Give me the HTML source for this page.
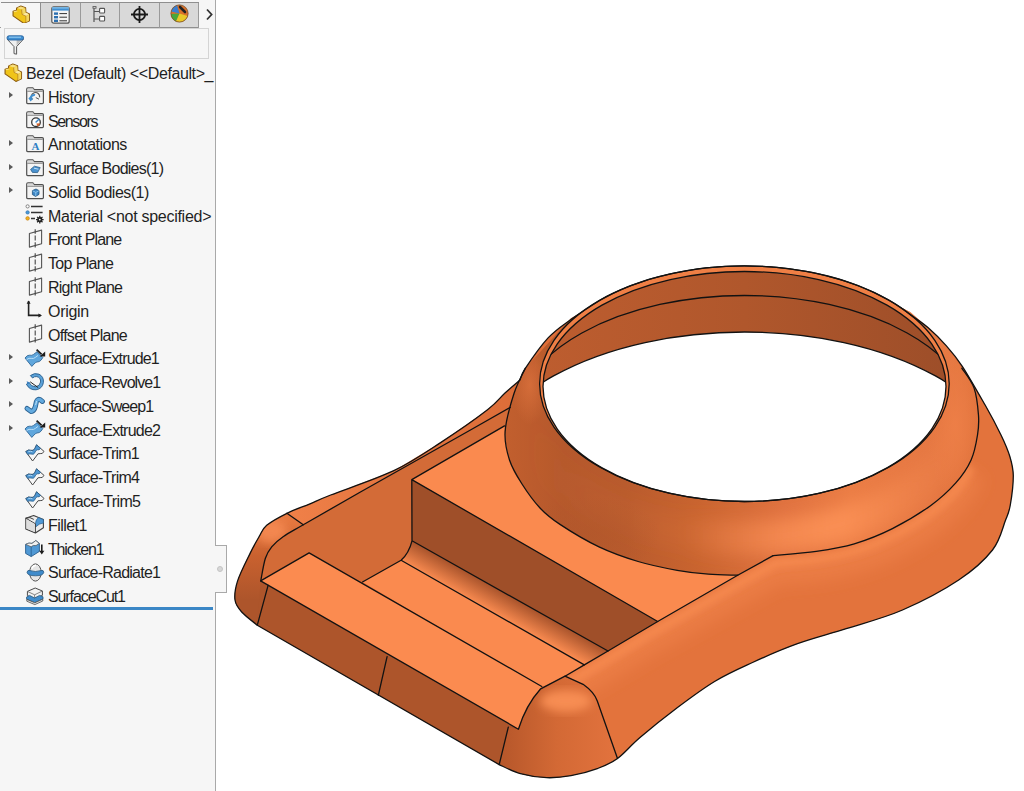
<!DOCTYPE html>
<html><head><meta charset="utf-8"><style>
html,body{margin:0;padding:0;width:1024px;height:791px;overflow:hidden;background:#fff;}
#side{position:absolute;left:0;top:0;width:215px;height:791px;background:#f6f6f6;border-right:1px solid #a9a9a9;overflow:hidden}
.row{position:absolute;font-family:"Liberation Sans",sans-serif;font-size:16px;line-height:23.77px;height:23.77px;color:#1f1f1f;white-space:nowrap;}
.exp{position:absolute;left:9px;width:0;height:0;border-top:3.5px solid transparent;border-bottom:3.5px solid transparent;border-left:4px solid #5a5a5a;}
.ic{position:absolute;overflow:visible}
#model{position:absolute;left:0;top:0}
</style></head><body>
<svg id="model" width="1024" height="791" viewBox="0 0 1024 791"><defs>
<linearGradient id="gCone" x1="505" y1="0" x2="985" y2="0" gradientUnits="userSpaceOnUse">
 <stop offset="0" stop-color="#c8612f"/><stop offset="0.25" stop-color="#d96b36"/><stop offset="0.6" stop-color="#f5874c"/><stop offset="0.85" stop-color="#ea7a40"/><stop offset="1" stop-color="#dc6c36"/></linearGradient>
<linearGradient id="gInner" x1="540" y1="0" x2="950" y2="0" gradientUnits="userSpaceOnUse">
 <stop offset="0" stop-color="#bd5d2f"/><stop offset="0.5" stop-color="#b0572c"/><stop offset="1" stop-color="#9d4e29"/></linearGradient>
<linearGradient id="gFillet" x1="0" y1="0" x2="1" y2="0" gradientTransform="rotate(0)">
 <stop offset="0" stop-color="#f98a4f"/><stop offset="1" stop-color="#a5522b"/></linearGradient>
<linearGradient id="gFil2" gradientUnits="userSpaceOnUse" x1="500" y1="616.8" x2="511.3" y2="596.7">
 <stop offset="0" stop-color="#fb8c51"/><stop offset="1" stop-color="#a8532b"/></linearGradient>
<radialGradient id="gRail" gradientUnits="userSpaceOnUse" cx="720" cy="600" r="260">
 <stop offset="0" stop-color="#f78a4f"/><stop offset="0.5" stop-color="#e57640"/><stop offset="1" stop-color="#dd6d37"/></radialGradient>
<linearGradient id="gCapR" gradientUnits="userSpaceOnUse" x1="505" y1="0" x2="620" y2="0">
 <stop offset="0" stop-color="#b8582b"/><stop offset="0.45" stop-color="#d36935"/><stop offset="1" stop-color="#e3733e"/></linearGradient>
<linearGradient id="gCapL" gradientUnits="userSpaceOnUse" x1="0" y1="520" x2="0" y2="600">
 <stop offset="0" stop-color="#e67840"/><stop offset="0.45" stop-color="#c9612f"/><stop offset="1" stop-color="#ad552b"/></linearGradient>
<radialGradient id="gHi"><stop offset="0" stop-color="#f98d52"/><stop offset="0.6" stop-color="#f08048" stop-opacity="0.7"/><stop offset="1" stop-color="#e87a42" stop-opacity="0"/></radialGradient>
<radialGradient id="gHi2"><stop offset="0" stop-color="#ef8048"/><stop offset="1" stop-color="#ef8048" stop-opacity="0"/></radialGradient>
<radialGradient id="gHi3"><stop offset="0" stop-color="#ec7d45"/><stop offset="1" stop-color="#ec7d45" stop-opacity="0"/></radialGradient>
<radialGradient id="gDk"><stop offset="0" stop-color="#b1572b"/><stop offset="1" stop-color="#b1572b" stop-opacity="0"/></radialGradient>
<linearGradient id="gHiLin" gradientUnits="userSpaceOnUse" x1="520" y1="0" x2="990" y2="0">
 <stop offset="0" stop-color="#f58a50" stop-opacity="0"/><stop offset="0.35" stop-color="#f58a50" stop-opacity="0.1"/><stop offset="0.55" stop-color="#fb9055" stop-opacity="0.7"/><stop offset="0.68" stop-color="#fb9055" stop-opacity="0.95"/><stop offset="0.85" stop-color="#f58a50" stop-opacity="0.35"/><stop offset="1" stop-color="#f58a50" stop-opacity="0.1"/></linearGradient>
<filter id="blur8" x="-20%" y="-20%" width="140%" height="140%"><feGaussianBlur stdDeviation="8"/></filter>
<filter id="blur5" x="-20%" y="-20%" width="140%" height="140%"><feGaussianBlur stdDeviation="5"/></filter>
<filter id="blur3" x="-20%" y="-20%" width="140%" height="140%"><feGaussianBlur stdDeviation="3"/></filter>
<linearGradient id="gLip" gradientUnits="userSpaceOnUse" x1="290" y1="0" x2="520" y2="0"><stop offset="0" stop-color="#f08048"/><stop offset="0.4" stop-color="#e57640"/><stop offset="1" stop-color="#dc6d38"/></linearGradient>
<linearGradient id="gConeBase" gradientUnits="userSpaceOnUse" x1="505" y1="0" x2="985" y2="0">
 <stop offset="0" stop-color="#c25f2e"/><stop offset="0.12" stop-color="#b5582c"/><stop offset="0.25" stop-color="#b95b2d"/><stop offset="0.4" stop-color="#c9642f"/><stop offset="0.58" stop-color="#e07240"/><stop offset="0.72" stop-color="#eb7d45"/><stop offset="0.88" stop-color="#e57742"/><stop offset="1" stop-color="#dc6e38"/></linearGradient>
<clipPath id="cTi"><ellipse cx="744.5" cy="386.5" rx="201.5" ry="115"/></clipPath>
<clipPath id="cHb"><ellipse cx="744.5" cy="482" rx="270" ry="150"/></clipPath>
</defs>
<path d="M257.3,625.2 C254.7,623.0 245.4,616.2 241.7,612.0 C238.0,607.8 235.7,605.2 235.0,600.0 C234.3,594.8 235.1,588.7 237.6,580.9 C240.1,573.1 246.6,560.5 250.2,553.1 C253.8,545.7 256.4,541.3 259.1,536.7 C261.9,532.1 262.1,529.2 266.7,525.3 C271.3,521.4 279.7,516.9 286.9,513.3 C294.1,509.7 302.7,506.9 310.0,503.8 C317.3,500.8 316.7,500.5 330.7,495.0 C344.7,489.5 375.5,479.4 393.8,470.7 C412.1,462.0 425.0,452.8 440.6,442.6 C456.2,432.5 476.8,418.1 487.5,409.8 C498.2,401.5 499.6,398.0 505.0,393.0 C510.4,388.0 517.5,382.2 520.0,380.0 L520.0,380.0 C520.9,378.1 520.6,375.3 525.3,368.3 C530.0,361.3 540.5,346.0 548.1,337.9 C555.7,329.8 562.1,325.9 570.9,319.5 C579.7,313.1 593.9,304.0 601.1,299.5 C608.3,295.1 609.7,294.9 614.2,292.8 C618.7,290.6 623.4,288.6 628.3,286.7 C633.1,284.8 638.1,283.0 643.2,281.3 C648.3,279.6 653.5,278.1 658.8,276.7 C664.1,275.3 669.6,274.0 675.1,272.8 C680.6,271.7 686.2,270.7 691.9,269.8 C697.6,269.0 703.3,268.2 709.1,267.7 C714.9,267.1 720.7,266.6 726.6,266.3 C732.4,266.1 738.3,265.9 744.1,265.9 C750.0,265.9 755.9,266.0 761.7,266.3 C767.6,266.6 773.4,267.0 779.2,267.6 C784.9,268.2 790.7,268.9 796.4,269.8 C802.0,270.6 807.7,271.6 813.2,272.7 C818.7,273.9 824.2,275.1 829.5,276.5 C834.8,277.9 840.1,279.5 845.2,281.1 C850.3,282.8 855.3,284.6 860.1,286.5 C864.9,288.4 869.7,290.4 874.2,292.6 C878.7,294.7 883.1,297.0 887.3,299.3 C891.5,301.7 895.5,304.1 899.4,306.7 C903.2,309.2 905.5,311.1 910.3,314.6 C915.1,318.1 922.2,322.6 928.2,327.8 C934.2,333.0 940.7,339.5 946.4,345.9 C952.1,352.3 955.9,356.5 962.3,366.3 C968.7,376.1 978.5,393.4 985.0,404.8 C991.5,416.2 996.8,426.3 1001.0,435.0 C1005.2,443.7 1008.0,450.2 1010.0,457.0 C1012.0,463.8 1013.2,467.8 1013.3,475.8 C1013.3,483.8 1011.6,497.6 1010.3,505.0 C1009.0,512.4 1008.6,512.5 1005.6,520.0 C1002.6,527.5 1000.3,540.0 992.5,550.0 C984.7,560.0 973.7,570.0 958.7,580.0 C943.7,590.0 921.2,601.9 902.5,610.0 C883.8,618.1 863.7,623.1 846.2,628.7 C828.7,634.3 813.1,638.1 797.5,643.7 C781.9,649.3 766.2,656.2 752.5,662.5 C738.8,668.8 727.5,673.7 715.0,681.2 C702.5,688.7 690.0,698.1 677.5,707.5 C665.0,716.9 650.0,729.0 640.0,737.5 C630.0,746.0 624.6,753.3 617.5,758.5 C610.4,763.7 605.0,765.7 597.3,768.6 C589.5,771.5 579.4,774.2 571.0,775.7 C562.6,777.2 555.1,778.0 546.7,777.7 C538.3,777.4 528.3,775.9 520.4,773.7 C512.5,771.5 502.7,766.1 499.2,764.6 Z" fill="#df6e38"/>
<clipPath id="cRail"><path d="M565.0,676.2 L584.3,664.9 L608.0,651.0 L657.7,621.5 L737.7,575.2 L773.1,555.6 C780.3,554.9 802.7,553.4 816.2,551.4 C829.7,549.4 841.6,547.6 854.3,543.8 C867.0,540.0 879.7,535.0 892.4,528.6 C905.1,522.2 919.9,513.3 930.5,505.7 C941.1,498.1 949.0,490.5 955.8,482.9 C962.6,475.3 967.5,468.0 971.1,460.0 C974.7,452.0 976.3,442.5 977.5,435.0 C978.7,427.5 979.1,423.1 978.5,415.2 C977.9,407.3 976.8,395.7 974.0,387.9 C971.2,380.1 963.8,371.5 961.8,368.2 L962.3,366.3  C966.1,372.7 978.5,393.4 985.0,404.8 C991.5,416.2 996.8,426.3 1001.0,435.0 C1005.2,443.7 1008.0,450.2 1010.0,457.0 C1012.0,463.8 1013.2,467.8 1013.3,475.8 C1013.3,483.8 1011.6,497.6 1010.3,505.0 C1009.0,512.4 1008.6,512.5 1005.6,520.0 C1002.6,527.5 1000.3,540.0 992.5,550.0 C984.7,560.0 973.7,570.0 958.7,580.0 C943.7,590.0 921.2,601.9 902.5,610.0 C883.8,618.1 863.7,623.1 846.2,628.7 C828.7,634.3 813.1,638.1 797.5,643.7 C781.9,649.3 766.2,656.2 752.5,662.5 C738.8,668.8 727.5,673.7 715.0,681.2 C702.5,688.7 690.0,698.1 677.5,707.5 C665.0,716.9 650.0,729.0 640.0,737.5 C630.0,746.0 621.2,755.0 617.5,758.5 L597.3,700.9 L583.1,684.3 Z"/></clipPath>
<g clip-path="url(#cRail)">
<rect x="560" y="360" width="470" height="420" fill="#e3733c"/>
<path d="M566,690 L600,670 L650,640 L740,590 L776,570  C782.7,569.5 803.2,568.8 816.2,567.0 C829.2,565.2 841.6,562.8 854.3,559.0 C867.0,555.2 879.7,550.3 892.4,544.0 C905.1,537.7 919.9,528.8 930.5,521.0 C941.1,513.2 949.0,505.2 955.8,497.0 C962.5,488.8 968.5,476.2 971.0,472.0" fill="none" stroke="#f48850" stroke-width="30" stroke-opacity="0.45" filter="url(#blur8)"/>
<path d="M566,684 L600,664 L650,634 L740,583 L776,563  C782.7,562.3 803.2,561.0 816.2,559.0 C829.2,557.0 841.6,554.8 854.3,551.0 C867.0,547.2 879.7,542.3 892.4,536.0 C905.1,529.7 919.9,520.7 930.5,513.0 C941.1,505.3 949.0,497.7 955.8,490.0 C962.5,482.3 968.5,470.8 971.0,467.0" fill="none" stroke="#f98d52" stroke-width="9" stroke-opacity="0.7" filter="url(#blur3)"/>
</g>
<clipPath id="cCone"><path d="M525.3,368.3 C523.4,372.5 517.4,382.9 514.0,393.5 C510.6,404.1 505.9,420.5 505.1,431.6 C504.4,442.7 506.7,451.3 509.5,460.0 C512.3,468.7 516.9,476.0 522.0,484.0 C527.1,492.0 533.7,501.3 540.0,508.0 C546.3,514.7 550.2,517.9 560.0,524.4 C569.8,530.9 586.0,540.7 599.0,546.9 C612.0,553.1 625.1,557.6 638.1,561.5 C651.1,565.4 665.5,568.2 677.2,570.3 C688.9,572.4 698.3,573.4 708.4,574.2 C718.5,575.0 732.8,575.0 737.7,575.2 L773.1,555.6  C780.3,554.9 802.7,553.4 816.2,551.4 C829.7,549.4 841.6,547.6 854.3,543.8 C867.0,540.0 879.7,535.0 892.4,528.6 C905.1,522.2 919.9,513.3 930.5,505.7 C941.1,498.1 949.0,490.5 955.8,482.9 C962.6,475.3 967.5,468.0 971.1,460.0 C974.7,452.0 976.3,442.5 977.5,435.0 C978.7,427.5 979.1,423.1 978.5,415.2 C977.9,407.3 976.8,395.7 974.0,387.9 C971.2,380.1 963.8,371.5 961.8,368.2 L946.4,345.9 L928.2,327.8 L910.3,312.1 L870,292 L800,272 L743,266 L680,272 L620,290 L570.9,318.2 Z"/></clipPath>
<g clip-path="url(#cCone)">
<rect x="480" y="250" width="540" height="340" fill="url(#gConeBase)"/>
<ellipse cx="744.5" cy="402" rx="222" ry="136" fill="none" stroke="url(#gHiLin)" stroke-width="34" filter="url(#blur8)"/>
<ellipse cx="590" cy="535" rx="70" ry="40" fill="url(#gDk)" opacity="0.6"/>
<ellipse cx="955" cy="425" rx="28" ry="75" fill="url(#gHi2)" opacity="0.8"/>
<ellipse cx="530" cy="385" rx="18" ry="40" fill="url(#gHi3)" opacity="0.5"/>
</g>
<ellipse cx="744.4" cy="383.7" rx="204.8" ry="117.8" fill="#ef7f45"/>
<ellipse cx="744.5" cy="386.5" rx="201.5" ry="115" fill="url(#gInner)"/>
<g clip-path="url(#cTi)"><ellipse cx="744.5" cy="482" rx="270" ry="150" fill="#ffffff"/></g>
<path d="M286.9,513.3 L330.7,495.0 L393.8,470.7 L440.6,442.6 L487.5,409.8 L505.0,393.0 L520.0,380.0 L525.3,368.3 L514.0,393.5 L510.4,407.3 L470.0,430.3 L360.0,492.3 L303.2,524.8 Z" fill="url(#gLip)"/>
<path d="M510.4,407.3 C503.7,411.1 495.1,416.1 470.0,430.3 C444.9,444.5 387.8,476.6 360.0,492.3 C332.2,508.0 316.1,517.3 303.3,524.7 C290.5,532.1 288.4,533.0 283.1,536.7 C277.8,540.4 274.6,543.2 271.7,546.8 C268.8,550.4 267.2,552.7 265.4,558.2 C263.6,563.7 261.7,576.0 261.0,579.6 L309.1,552.9 L362.5,582.0 L401.1,560.3 Q409,553 412,540.8 L411.8,479.6 L504.5,425.9 Z" fill="#d36b37"/>
<path d="M411.8,479.6 L504.5,425.9 C504.9,429.9 505.6,442.6 507.0,450.0 C508.4,457.4 510.5,464.3 513.0,470.0 C515.5,475.7 517.5,477.7 522.0,484.0 C526.5,490.3 533.7,501.3 540.0,508.0 C546.3,514.7 550.2,517.9 560.0,524.4 C569.8,530.9 586.0,540.7 599.0,546.9 C612.0,553.1 625.1,557.6 638.1,561.5 C651.1,565.4 665.5,568.2 677.2,570.3 C688.9,572.4 698.3,573.4 708.4,574.2 C718.5,575.0 732.8,575.0 737.7,575.2 L657.7,621.5 Z" fill="#fa8a4f"/>
<path d="M411.8,479.6 L657.7,621.5 L608.0,651.0 L412.0,540.8 Z" fill="#9f4f29"/>
<path d="M412,540.8 L608,651 L584.3,664.9 L401.1,560.3 Q409,553 412,540.8 Z" fill="url(#gFil2)"/>
<path d="M362.5,582.0 L401.1,560.3 L584.3,664.9 L565.0,676.2 L540.7,687.7 Z" fill="#fa8a4f"/>
<path d="M257.3,625.2 C254.7,623.0 245.4,616.2 241.7,612.0 C238.0,607.8 235.7,605.2 235.0,600.0 C234.3,594.8 235.1,588.7 237.6,580.9 C240.1,573.1 246.6,560.5 250.2,553.1 C253.8,545.7 256.4,541.3 259.1,536.7 C261.9,532.1 262.1,529.2 266.7,525.3 C271.3,521.4 283.5,515.3 286.9,513.3 L303.3,524.7 C299.9,526.7 288.4,533.0 283.1,536.7 C277.8,540.4 274.6,543.2 271.7,546.8 C268.8,550.4 267.2,552.7 265.4,558.2 C263.6,563.7 261.7,576.0 261.0,579.6 L268.1,585.3 Z" fill="url(#gCapL)"/>
<g clip-path="url(#cCapL)"><ellipse cx="271" cy="531" rx="16" ry="12" fill="#f58a52" opacity="0.9" filter="url(#blur5)"/></g>
<clipPath id="cCapL"><path d="M257.3,625.2 C254.7,623.0 245.4,616.2 241.7,612.0 C238.0,607.8 235.7,605.2 235.0,600.0 C234.3,594.8 235.1,588.7 237.6,580.9 C240.1,573.1 246.6,560.5 250.2,553.1 C253.8,545.7 256.4,541.3 259.1,536.7 C261.9,532.1 262.1,529.2 266.7,525.3 C271.3,521.4 283.5,515.3 286.9,513.3 L303.3,524.7 C299.9,526.7 288.4,533.0 283.1,536.7 C277.8,540.4 274.6,543.2 271.7,546.8 C268.8,550.4 267.2,552.7 265.4,558.2 C263.6,563.7 261.7,576.0 261.0,579.6 L268.1,585.3 Z"/></clipPath>
<path d="M260.6,580.9 L518.4,729.2 L499.2,764.6 L257.3,625.2 Z" fill="#ad552b"/>
<path d="M260.6,580.9 L309.1,552.9 L541.8,686.5 Q530,700 518.4,729.2 Z" fill="#fb8b50"/>
<path d="M508.3,727.2 L518.4,729.2 Q526,705 540.7,688.8 L565,676.2 L583.1,684.3 Q594,692 597.3,700.9 L617.5,758.5  C614.1,760.2 605.0,765.7 597.3,768.6 C589.5,771.5 579.4,774.2 571.0,775.7 C562.6,777.2 555.1,778.0 546.7,777.7 C538.3,777.4 528.3,775.9 520.4,773.7 C512.5,771.5 502.7,766.1 499.2,764.6 Z" fill="url(#gCapR)"/>
<clipPath id="cCapR"><path d="M508.3,727.2 L518.4,729.2 Q526,705 540.7,688.8 L565,676.2 L583.1,684.3 Q594,692 597.3,700.9 L617.5,758.5  C614.1,760.2 605.0,765.7 597.3,768.6 C589.5,771.5 579.4,774.2 571.0,775.7 C562.6,777.2 555.1,778.0 546.7,777.7 C538.3,777.4 528.3,775.9 520.4,773.7 C512.5,771.5 502.7,766.1 499.2,764.6 Z"/></clipPath>
<g clip-path="url(#cCapR)"><ellipse cx="566" cy="701" rx="26" ry="11" fill="#f78d53" filter="url(#blur5)"/></g>
<g fill="none" stroke="#121212" stroke-width="1.3" stroke-linejoin="round" stroke-linecap="round">
<path d="M257.3,625.2 C254.7,623.0 245.4,616.2 241.7,612.0 C238.0,607.8 235.7,605.2 235.0,600.0 C234.3,594.8 235.1,588.7 237.6,580.9 C240.1,573.1 246.6,560.5 250.2,553.1 C253.8,545.7 256.4,541.3 259.1,536.7 C261.9,532.1 262.1,529.2 266.7,525.3 C271.3,521.4 279.7,516.9 286.9,513.3 C294.1,509.7 302.7,506.9 310.0,503.8 C317.3,500.8 316.7,500.5 330.7,495.0 C344.7,489.5 375.5,479.4 393.8,470.7 C412.1,462.0 425.0,452.8 440.6,442.6 C456.2,432.5 476.8,418.1 487.5,409.8 C498.2,401.5 499.6,398.0 505.0,393.0 C510.4,388.0 517.5,382.2 520.0,380.0 L520.0,380.0 C520.9,378.1 520.6,375.3 525.3,368.3 C530.0,361.3 540.5,346.0 548.1,337.9 C555.7,329.8 562.1,325.9 570.9,319.5 C579.7,313.1 593.9,304.0 601.1,299.5 C608.3,295.1 609.7,294.9 614.2,292.8 C618.7,290.6 623.4,288.6 628.3,286.7 C633.1,284.8 638.1,283.0 643.2,281.3 C648.3,279.6 653.5,278.1 658.8,276.7 C664.1,275.3 669.6,274.0 675.1,272.8 C680.6,271.7 686.2,270.7 691.9,269.8 C697.6,269.0 703.3,268.2 709.1,267.7 C714.9,267.1 720.7,266.6 726.6,266.3 C732.4,266.1 738.3,265.9 744.1,265.9 C750.0,265.9 755.9,266.0 761.7,266.3 C767.6,266.6 773.4,267.0 779.2,267.6 C784.9,268.2 790.7,268.9 796.4,269.8 C802.0,270.6 807.7,271.6 813.2,272.7 C818.7,273.9 824.2,275.1 829.5,276.5 C834.8,277.9 840.1,279.5 845.2,281.1 C850.3,282.8 855.3,284.6 860.1,286.5 C864.9,288.4 869.7,290.4 874.2,292.6 C878.7,294.7 883.1,297.0 887.3,299.3 C891.5,301.7 895.5,304.1 899.4,306.7 C903.2,309.2 905.5,311.1 910.3,314.6 C915.1,318.1 922.2,322.6 928.2,327.8 C934.2,333.0 940.7,339.5 946.4,345.9 C952.1,352.3 955.9,356.5 962.3,366.3 C968.7,376.1 978.5,393.4 985.0,404.8 C991.5,416.2 996.8,426.3 1001.0,435.0 C1005.2,443.7 1008.0,450.2 1010.0,457.0 C1012.0,463.8 1013.2,467.8 1013.3,475.8 C1013.3,483.8 1011.6,497.6 1010.3,505.0 C1009.0,512.4 1008.6,512.5 1005.6,520.0 C1002.6,527.5 1000.3,540.0 992.5,550.0 C984.7,560.0 973.7,570.0 958.7,580.0 C943.7,590.0 921.2,601.9 902.5,610.0 C883.8,618.1 863.7,623.1 846.2,628.7 C828.7,634.3 813.1,638.1 797.5,643.7 C781.9,649.3 766.2,656.2 752.5,662.5 C738.8,668.8 727.5,673.7 715.0,681.2 C702.5,688.7 690.0,698.1 677.5,707.5 C665.0,716.9 650.0,729.0 640.0,737.5 C630.0,746.0 624.6,753.3 617.5,758.5 C610.4,763.7 605.0,765.7 597.3,768.6 C589.5,771.5 579.4,774.2 571.0,775.7 C562.6,777.2 555.1,778.0 546.7,777.7 C538.3,777.4 528.3,775.9 520.4,773.7 C512.5,771.5 502.7,766.1 499.2,764.6 Z"/>
<ellipse cx="744.4" cy="383.7" rx="204.8" ry="117.8"/>
<ellipse cx="744.5" cy="386.5" rx="201.5" ry="115"/>
<g clip-path="url(#cTi)"><ellipse cx="744.5" cy="482" rx="270" ry="150"/><path d="M0,0"/></g>
<g clip-path="url(#cTi)"><ellipse cx="744.5" cy="423.5" rx="230" ry="128"/></g>
<path d="M525.3,368.3 C523.4,372.5 517.4,382.9 514.0,393.5 C510.6,404.1 505.9,420.5 505.1,431.6 C504.4,442.7 506.7,451.3 509.5,460.0 C512.3,468.7 516.9,476.0 522.0,484.0 C527.1,492.0 533.7,501.3 540.0,508.0 C546.3,514.7 550.2,517.9 560.0,524.4 C569.8,530.9 586.0,540.7 599.0,546.9 C612.0,553.1 625.1,557.6 638.1,561.5 C651.1,565.4 665.5,568.2 677.2,570.3 C688.9,572.4 698.3,573.4 708.4,574.2 C718.5,575.0 732.8,575.0 737.7,575.2"/>
<path d="M773.1,555.6 C780.3,554.9 802.7,553.4 816.2,551.4 C829.7,549.4 841.6,547.6 854.3,543.8 C867.0,540.0 879.7,535.0 892.4,528.6 C905.1,522.2 919.9,513.3 930.5,505.7 C941.1,498.1 949.0,490.5 955.8,482.9 C962.6,475.3 967.5,468.0 971.1,460.0 C974.7,452.0 976.3,442.5 977.5,435.0 C978.7,427.5 979.1,423.1 978.5,415.2 C977.9,407.3 976.8,395.7 974.0,387.9 C971.2,380.1 963.8,371.5 961.8,368.2"/>
<path d="M261.0,579.6 C261.7,576.0 263.6,563.7 265.4,558.2 C267.2,552.7 268.8,550.4 271.7,546.8 C274.6,543.2 277.8,540.4 283.1,536.7 C288.4,533.0 290.5,532.1 303.3,524.7 C316.1,517.3 332.2,508.0 360.0,492.3 C387.8,476.6 444.9,444.5 470.0,430.3 C495.1,416.1 503.7,411.1 510.4,407.3"/>
<path d="M773.1,555.6 L737.7,575.2 L657.7,621.5 L608.0,651.0 L584.3,664.9 L565.0,676.2"/>
<path d="M286.9,513.3 L303.3,524.7"/>
<path d="M260.6,580.9 L309.1,552.9 L541.8,686.5"/>
<path d="M260.6,580.9 L518.4,729.2 Q526,705 540.7,688.8 L565,676.2 L583.1,684.3 Q594,692 597.3,700.9 L617.5,758.5"/>
<path d="M268.1,585.3 L257.3,625.2 M387.1,656.6 L378.3,695.3 M508.3,727.2 L499.2,764.6"/>
<path d="M362.5,582 L401.1,560.3 Q409,553 412,540.8 L411.8,479.6 L504.5,425.9 M401.1,560.3 L584.3,664.9 M412,540.8 L608,651 M411.8,479.6 L657.7,621.5"/>
</g></svg>
<div id="side">
<div style="position:absolute;left:4px;top:28px;width:205px;height:31px;border:1px solid #d4d4d4;background:#f6f6f6;box-sizing:border-box"></div>
<div style="position:absolute;left:1px;top:2px;width:198px;height:1px;background:#8f8f8f"></div>
<div style="position:absolute;left:40px;top:3px;width:159px;height:24px;background:#d9d9d9;border-bottom:1px solid #8f8f8f"></div>
<div style="position:absolute;left:40px;top:3px;width:1px;height:25px;background:#8f8f8f"></div>
<div style="position:absolute;left:80px;top:3px;width:1px;height:25px;background:#9a9a9a"></div>
<div style="position:absolute;left:119px;top:3px;width:1px;height:25px;background:#9a9a9a"></div>
<div style="position:absolute;left:159px;top:3px;width:1px;height:25px;background:#9a9a9a"></div>
<div style="position:absolute;left:198px;top:3px;width:1px;height:25px;background:#9a9a9a"></div>
<div style="position:absolute;left:0px;top:27px;width:1px;height:1px;background:#9a9a9a"></div>
<svg style="position:absolute;left:12px;top:5px" width="18" height="18" viewBox="0 0 18 18"><path d="M1.06,6.2 L4.4,5.3 L4.7,2.9 L8.8,1.1 L13.6,2.75 L13.9,7.3 L17.5,9 L17.5,15.7 L11.9,18.4 L1.06,10.9 Z" fill="#f0c419" stroke="#8a5a12" stroke-width="1.1" stroke-linejoin="round"/><path d="M4.9,3.1 L8.8,1.5 L13.2,3 L9.6,4.5 Z" fill="#f7df80"/><path d="M9.8,4.7 L13.3,3.2 L13.5,7.4 L10.1,9.3 Z" fill="#f3d866"/><path d="M10.3,9.6 L13.9,7.6 L17.1,9.2 L13.7,10.9 Z" fill="#fbeaa6"/><path d="M13.9,11.2 L17.1,9.6 L17.1,15.4 L13.9,17.6 Z" fill="#f4d65e"/><path d="M9.6,4.5 L10.1,9.4 L13.8,11 L13.9,18" fill="none" stroke="#b07a20" stroke-width="0.7"/><path d="M1.3,6.3 L4.4,5.4 L5.6,6.2 L2.6,7.2 Z" fill="#f7df80"/></svg>
<svg style="position:absolute;left:51px;top:6px" width="19" height="18" viewBox="0 0 19 18"><rect x="0.8" y="0.8" width="17.4" height="16.4" rx="2" fill="#f4f4f4" stroke="#555" stroke-width="1.2"/><rect x="1.2" y="1.2" width="16.6" height="3.4" fill="#3f8fd2"/><rect x="1.2" y="1.2" width="16.6" height="1.4" fill="#7fbde9"/><rect x="3" y="6.4" width="4" height="2.4" fill="#2c6fb0"/><rect x="3" y="10" width="4" height="2.4" fill="#2c6fb0"/><rect x="3" y="13.6" width="4" height="2.4" fill="#2c6fb0"/><path d="M8.4,7.6 H16 M8.4,11.2 H16 M8.4,14.8 H16" stroke="#333" stroke-width="1"/></svg>
<svg style="position:absolute;left:92px;top:6px" width="16" height="18" viewBox="0 0 16 18"><path d="M2,1 V16 M2,5.5 H7 M2,13 H7" fill="none" stroke="#555" stroke-width="1.2"/><rect x="1" y="0.6" width="3" height="1.6" fill="#fff" stroke="#555" stroke-width="0.9"/><rect x="7.6" y="2.4" width="5" height="4.6" rx="0.8" fill="#fff" stroke="#555" stroke-width="1.1"/><rect x="7.6" y="10.4" width="5" height="4.6" rx="0.8" fill="#fff" stroke="#555" stroke-width="1.1"/></svg>
<svg style="position:absolute;left:130px;top:5px" width="19" height="19" viewBox="0 0 19 19"><circle cx="9.5" cy="9.5" r="5.6" fill="none" stroke="#1a1a1a" stroke-width="1.8"/><path d="M9.5,1 V18 M1,9.5 H18" stroke="#1a1a1a" stroke-width="1.8"/></svg>
<svg style="position:absolute;left:170px;top:4px" width="19" height="19" viewBox="0 0 19 19"><circle cx="9.5" cy="9.5" r="8.6" fill="#d9702a"/><path d="M9.5,9.5 L1,10 A8.6,8.6 0 0 0 6,17.4 Z" fill="#48a83a"/><path d="M9.5,9.5 L6,17.4 A8.6,8.6 0 0 0 17.6,12 Z" fill="#e8c828"/><path d="M9.5,9.5 L1.2,7.4 A8.6,8.6 0 0 1 7,1.2 Z" fill="#3a7fd0"/><path d="M10,3 L15,8" stroke="#222" stroke-width="2.6" stroke-linecap="round"/><circle cx="9.5" cy="9.5" r="8.6" fill="none" stroke="#7a4a20" stroke-width="0.8"/></svg>
<svg style="position:absolute;left:205px;top:8px" width="9" height="13" viewBox="0 0 9 13"><path d="M2,1.5 L6.6,6.5 L2,11.5" fill="none" stroke="#333" stroke-width="1.8"/></svg>
<svg style="position:absolute;left:6px;top:35px" width="19" height="20" viewBox="0 0 19 20"><path d="M1.2,4.2 L8,11.6 L8,18.6 L10.6,19.2 L10.6,11.6 L17.4,4.2 Z" fill="#efefef" stroke="#5a5a5a" stroke-width="1" stroke-linejoin="round"/><path d="M10.6,5 L15.6,5 L10.6,10.6 Z" fill="#bdbdbd"/><rect x="1" y="0.8" width="16.6" height="4.2" rx="2" fill="#3f8fd2" stroke="#2a64a0" stroke-width="0.9"/><rect x="3" y="1.6" width="12" height="1.2" fill="#8cc6ef"/></svg>

<div style="position:absolute;left:0;top:607px;width:213px;height:3px;background:#3b87c6"></div>
<div class="row" id="r0" style="top:62.10px;left:26px;letter-spacing:-0.400px">Bezel (Default) &lt;&lt;Default&gt;_</div>
<svg class="ic" style="left:4px;top:62.50px" width="18" height="18" viewBox="0 0 18 18"><path d="M1.06,6.2 L4.4,5.3 L4.7,2.9 L8.8,1.1 L13.6,2.75 L13.9,7.3 L17.5,9 L17.5,15.7 L11.9,18.4 L1.06,10.9 Z" fill="#f0c419" stroke="#8a5a12" stroke-width="1.1" stroke-linejoin="round"/><path d="M4.9,3.1 L8.8,1.5 L13.2,3 L9.6,4.5 Z" fill="#f7df80"/><path d="M9.8,4.7 L13.3,3.2 L13.5,7.4 L10.1,9.3 Z" fill="#f3d866"/><path d="M10.3,9.6 L13.9,7.6 L17.1,9.2 L13.7,10.9 Z" fill="#fbeaa6"/><path d="M13.9,11.2 L17.1,9.6 L17.1,15.4 L13.9,17.6 Z" fill="#f4d65e"/><path d="M9.6,4.5 L10.1,9.4 L13.8,11 L13.9,18" fill="none" stroke="#b07a20" stroke-width="0.7"/><path d="M1.3,6.3 L4.4,5.4 L5.6,6.2 L2.6,7.2 Z" fill="#f7df80"/></svg>
<div class="row" id="r1" style="top:85.87px;left:48px;letter-spacing:-0.500px">History</div>
<div class="exp" style="top:92.27px"></div>
<svg class="ic" style="left:26px;top:87.37px" width="18" height="18" viewBox="0 0 18 18"><path d="M0.7,2.2 Q0.7,0.8 2,0.8 L6.8,0.8 L8.3,2.6 L16.2,2.6 Q17.4,2.6 17.4,3.8 L17.4,15.6 Q17.4,16.6 16.4,16.6 L1.7,16.6 Q0.7,16.6 0.7,15.6 Z" fill="#f4f4f4" stroke="#4f4f4f" stroke-width="1.2"/><rect x="1.4" y="1.5" width="6" height="2.2" fill="#d8d8d8"/><path d="M1.3,4.3 L16.8,4.3" stroke="#7a7a7a" stroke-width="0.9"/><path d="M13.6,10.4 A4.2,4.2 0 1 0 6.4,12.6" fill="none" stroke="#555" stroke-width="1.2"/><path d="M9.8,10.6 L13,12.2" stroke="#555" stroke-width="1"/><path d="M3.6,10.2 Q5.6,6.6 9.4,7.2 L8.6,9 Q6.4,8.8 5.6,11.4 L7.4,11.6 L4.6,14.4 L2.4,11.2 Z" fill="#3f8fd0"/></svg>
<div class="row" id="r2" style="top:109.64px;left:48px;letter-spacing:-1.367px">Sensors</div>
<svg class="ic" style="left:26px;top:111.14px" width="18" height="18" viewBox="0 0 18 18"><path d="M0.7,2.2 Q0.7,0.8 2,0.8 L6.8,0.8 L8.3,2.6 L16.2,2.6 Q17.4,2.6 17.4,3.8 L17.4,15.6 Q17.4,16.6 16.4,16.6 L1.7,16.6 Q0.7,16.6 0.7,15.6 Z" fill="#f4f4f4" stroke="#4f4f4f" stroke-width="1.2"/><rect x="1.4" y="1.5" width="6" height="2.2" fill="#d8d8d8"/><path d="M1.3,4.3 L16.8,4.3" stroke="#7a7a7a" stroke-width="0.9"/><circle cx="10" cy="11.2" r="4.3" fill="#fff" stroke="#333" stroke-width="1.3"/><path d="M9.6,11.6 L13.4,7.8" stroke="#3a86c8" stroke-width="1.4"/><path d="M10.4,12.4 L14.2,12.2 A4.3,4.3 0 0 1 11.4,15.2 Z" fill="#d8642a"/></svg>
<div class="row" id="r3" style="top:133.41px;left:48px;letter-spacing:-0.520px">Annotations</div>
<div class="exp" style="top:139.81px"></div>
<svg class="ic" style="left:26px;top:134.91px" width="18" height="18" viewBox="0 0 18 18"><path d="M0.7,2.2 Q0.7,0.8 2,0.8 L6.8,0.8 L8.3,2.6 L16.2,2.6 Q17.4,2.6 17.4,3.8 L17.4,15.6 Q17.4,16.6 16.4,16.6 L1.7,16.6 Q0.7,16.6 0.7,15.6 Z" fill="#f4f4f4" stroke="#4f4f4f" stroke-width="1.2"/><rect x="1.4" y="1.5" width="6" height="2.2" fill="#d8d8d8"/><path d="M1.3,4.3 L16.8,4.3" stroke="#7a7a7a" stroke-width="0.9"/><text x="9.4" y="15.2" font-family="Liberation Serif" font-size="11" font-weight="bold" fill="#2f7fc4" text-anchor="middle">A</text></svg>
<div class="row" id="r4" style="top:157.18px;left:48px;letter-spacing:-0.750px">Surface Bodies(1)</div>
<div class="exp" style="top:163.58px"></div>
<svg class="ic" style="left:26px;top:158.68px" width="18" height="18" viewBox="0 0 18 18"><path d="M0.7,2.2 Q0.7,0.8 2,0.8 L6.8,0.8 L8.3,2.6 L16.2,2.6 Q17.4,2.6 17.4,3.8 L17.4,15.6 Q17.4,16.6 16.4,16.6 L1.7,16.6 Q0.7,16.6 0.7,15.6 Z" fill="#f4f4f4" stroke="#4f4f4f" stroke-width="1.2"/><rect x="1.4" y="1.5" width="6" height="2.2" fill="#d8d8d8"/><path d="M1.3,4.3 L16.8,4.3" stroke="#7a7a7a" stroke-width="0.9"/><path d="M4.6,10.4 L8.4,7.2 L14.2,8.6 L11.6,13.6 L6.4,13.4 Z" fill="#4a92cf" stroke="#2d5f8a" stroke-width="0.8"/><path d="M8,9.2 L12.4,10.2" stroke="#bfe0f8" stroke-width="1"/></svg>
<div class="row" id="r5" style="top:180.95px;left:48px;letter-spacing:-0.514px">Solid Bodies(1)</div>
<div class="exp" style="top:187.35px"></div>
<svg class="ic" style="left:26px;top:182.45px" width="18" height="18" viewBox="0 0 18 18"><path d="M0.7,2.2 Q0.7,0.8 2,0.8 L6.8,0.8 L8.3,2.6 L16.2,2.6 Q17.4,2.6 17.4,3.8 L17.4,15.6 Q17.4,16.6 16.4,16.6 L1.7,16.6 Q0.7,16.6 0.7,15.6 Z" fill="#f4f4f4" stroke="#4f4f4f" stroke-width="1.2"/><rect x="1.4" y="1.5" width="6" height="2.2" fill="#d8d8d8"/><path d="M1.3,4.3 L16.8,4.3" stroke="#7a7a7a" stroke-width="0.9"/><path d="M6.4,8.6 L10,7 L13,8.6 L13,12.4 L9.6,14.4 L6.4,12.6 Z" fill="#3d86c6" stroke="#25557f" stroke-width="0.8"/><path d="M6.6,8.8 L9.8,10.4 L12.8,8.8 M9.8,10.4 L9.8,14" stroke="#9bd0f4" stroke-width="0.8" fill="none"/></svg>
<div class="row" id="r6" style="top:204.72px;left:48px;letter-spacing:-0.278px">Material &lt;not specified&gt;</div>
<svg class="ic" style="left:26px;top:206.22px" width="18" height="18" viewBox="0 0 18 18"><circle cx="1.6" cy="0.4" r="1.6" fill="#fff" stroke="#777" stroke-width="0.9"/><circle cx="1.6" cy="6.4" r="1.7" fill="#4a9ad8" stroke="#2a6aa8" stroke-width="0.6"/><circle cx="1.6" cy="12.4" r="1.8" fill="#f0b020" stroke="#c07a10" stroke-width="0.6"/><path d="M5,0.4 L16.6,0.4 M5,6.4 L16.6,6.4 M5,12.4 L9,12.4" stroke="#333" stroke-width="1.5"/><circle cx="13.8" cy="13.6" r="2.6" fill="#222"/><path d="M13.8,9.8 V17.4 M10,13.6 H17.6 M11.1,10.9 L16.5,16.3 M16.5,10.9 L11.1,16.3" stroke="#222" stroke-width="1.3"/><circle cx="13.8" cy="13.6" r="0.9" fill="#fff"/></svg>
<div class="row" id="r7" style="top:228.49px;left:48px;letter-spacing:-0.860px">Front Plane</div>
<svg class="ic" style="left:26px;top:229.99px" width="18" height="18" viewBox="0 0 18 18"><path d="M3.4,3.5 L3.4,17.1 L15.6,13.8 L15.6,0.1 Z" fill="none" stroke="#555" stroke-width="1.1" stroke-linejoin="round"/><path d="M9.2,-0.8 V3.8 M9.2,5.6 V10.4 M9.2,12.2 V17.6" stroke="#444" stroke-width="1.1"/></svg>
<div class="row" id="r8" style="top:252.26px;left:48px;letter-spacing:-0.650px">Top Plane</div>
<svg class="ic" style="left:26px;top:253.76px" width="18" height="18" viewBox="0 0 18 18"><path d="M3.4,3.5 L3.4,17.1 L15.6,13.8 L15.6,0.1 Z" fill="none" stroke="#555" stroke-width="1.1" stroke-linejoin="round"/><path d="M9.2,-0.8 V3.8 M9.2,5.6 V10.4 M9.2,12.2 V17.6" stroke="#444" stroke-width="1.1"/></svg>
<div class="row" id="r9" style="top:276.03px;left:48px;letter-spacing:-0.780px">Right Plane</div>
<svg class="ic" style="left:26px;top:277.53px" width="18" height="18" viewBox="0 0 18 18"><path d="M3.4,3.5 L3.4,17.1 L15.6,13.8 L15.6,0.1 Z" fill="none" stroke="#555" stroke-width="1.1" stroke-linejoin="round"/><path d="M9.2,-0.8 V3.8 M9.2,5.6 V10.4 M9.2,12.2 V17.6" stroke="#444" stroke-width="1.1"/></svg>
<div class="row" id="r10" style="top:299.80px;left:48px;letter-spacing:-0.300px">Origin</div>
<svg class="ic" style="left:26px;top:301.30px" width="18" height="18" viewBox="0 0 18 18"><path d="M2.6,0 V14.4 H14.6" fill="none" stroke="#222" stroke-width="1.6"/><path d="M0.6,2.8 L2.6,-0.6 L4.6,2.8 Z M12.4,12.4 L16,14.4 L12.4,16.4 Z" fill="#222"/></svg>
<div class="row" id="r11" style="top:323.57px;left:48px;letter-spacing:-0.727px">Offset Plane</div>
<svg class="ic" style="left:26px;top:325.07px" width="18" height="18" viewBox="0 0 18 18"><path d="M3.4,3.5 L3.4,17.1 L15.6,13.8 L15.6,0.1 Z" fill="none" stroke="#555" stroke-width="1.1" stroke-linejoin="round"/><path d="M9.2,-0.8 V3.8 M9.2,5.6 V10.4 M9.2,12.2 V17.6" stroke="#444" stroke-width="1.1"/></svg>
<div class="row" id="r12" style="top:347.34px;left:48px;letter-spacing:-0.853px">Surface-Extrude1</div>
<div class="exp" style="top:353.74px"></div>
<svg class="ic" style="left:26px;top:348.84px" width="18" height="18" viewBox="0 0 18 18"><path d="M-1,9 Q1.2,5.8 3.6,6.2 Q6,6.8 7.6,5.4 L11,2.8 L16.8,8.6 Q15,11.8 13.2,12.6 Q10.6,12.8 9.2,13.8 L5.8,17.4 Z" fill="#5fa6dc" stroke="#2f6797" stroke-width="0.9" stroke-linejoin="round"/><path d="M0.6,10.6 Q3,8.6 5.2,9.4 Q7.6,10 9.4,8.4 L12,6.4" fill="none" stroke="#b9def7" stroke-width="1"/><path d="M10.6,0.6 L15.6,5.4" stroke="#1c1c1c" stroke-width="1.8"/><path d="M13.6,7.6 L19.2,2.6 L19.2,7.6 Z" fill="#1c1c1c"/></svg>
<div class="row" id="r13" style="top:371.11px;left:48px;letter-spacing:-0.933px">Surface-Revolve1</div>
<div class="exp" style="top:377.51px"></div>
<svg class="ic" style="left:26px;top:372.61px" width="18" height="18" viewBox="0 0 18 18"><path d="M4.4,2.6 Q8.4,-0.6 13,1.2 Q18,3.6 17.4,9.6 Q16.4,15.8 10,16.8 Q3.4,17.2 0.4,11.2 L3.2,9.6 Q4.8,13.6 9.4,13.8 Q14,13.4 14.6,9 Q14.8,4.6 10.8,3.6 Q8.2,3.2 6.6,5 Z" fill="#5aa1d8" stroke="#245a8a" stroke-width="0.9"/><path d="M0.6,8.2 L1.6,11.2 L4,9.4 Z" fill="#3a7fc0"/><path d="M4.2,8.8 L12.2,14.6" stroke="#222" stroke-width="1"/></svg>
<div class="row" id="r14" style="top:394.88px;left:48px;letter-spacing:-0.938px">Surface-Sweep1</div>
<div class="exp" style="top:401.28px"></div>
<svg class="ic" style="left:26px;top:396.38px" width="18" height="18" viewBox="0 0 18 18"><path d="M1,12.4 L5.2,15.6 Q8.4,14.8 9.4,10.4 L10.4,5.6 Q11.6,2.6 14,3.6 L16.4,5.4" fill="none" stroke="#2c6291" stroke-width="5" stroke-linecap="round" stroke-linejoin="round"/><path d="M1,12.4 L5.2,15.6 Q8.4,14.8 9.4,10.4 L10.4,5.6 Q11.6,2.6 14,3.6 L16.4,5.4" fill="none" stroke="#63aadf" stroke-width="3.2" stroke-linecap="round" stroke-linejoin="round"/><path d="M9.6,9 L10.6,5" stroke="#c4e4f8" stroke-width="0.9"/></svg>
<div class="row" id="r15" style="top:418.65px;left:48px;letter-spacing:-0.773px">Surface-Extrude2</div>
<div class="exp" style="top:425.05px"></div>
<svg class="ic" style="left:26px;top:420.15px" width="18" height="18" viewBox="0 0 18 18"><path d="M-1,9 Q1.2,5.8 3.6,6.2 Q6,6.8 7.6,5.4 L11,2.8 L16.8,8.6 Q15,11.8 13.2,12.6 Q10.6,12.8 9.2,13.8 L5.8,17.4 Z" fill="#5fa6dc" stroke="#2f6797" stroke-width="0.9" stroke-linejoin="round"/><path d="M0.6,10.6 Q3,8.6 5.2,9.4 Q7.6,10 9.4,8.4 L12,6.4" fill="none" stroke="#b9def7" stroke-width="1"/><path d="M10.6,0.6 L15.6,5.4" stroke="#1c1c1c" stroke-width="1.8"/><path d="M13.6,7.6 L19.2,2.6 L19.2,7.6 Z" fill="#1c1c1c"/></svg>
<div class="row" id="r16" style="top:442.42px;left:48px;letter-spacing:-0.750px">Surface-Trim1</div>
<svg class="ic" style="left:26px;top:443.92px" width="18" height="18" viewBox="0 0 18 18"><path d="M-0.2,7.6 Q2.6,5.2 5,6.4 Q7.6,7.4 9,4.2 L10.6,0.8 L18,7.4 Q16.4,10.4 14.2,9.6 Q11.6,8.8 10.4,12 L6.6,17 Z" fill="#f6f6f6" stroke="#4a4a4a" stroke-width="1" stroke-linejoin="round"/><path d="M-0.2,7.6 Q2.6,5.2 5,6.4 Q7.6,7.4 9,4.2 L10.6,0.8 L14.6,4.4 Q13,6.4 11.4,5.8 Q9.6,6 8.8,8.8 Q7.8,11 5,10 Q2.6,9.4 1.8,10.6 Z" fill="#4f97d2" stroke="#2a5f8e" stroke-width="0.8"/><path d="M2.4,7.6 Q4.6,6.8 6.4,7.8" stroke="#b9def7" stroke-width="0.9" fill="none"/></svg>
<div class="row" id="r17" style="top:466.19px;left:48px;letter-spacing:-0.733px">Surface-Trim4</div>
<svg class="ic" style="left:26px;top:467.69px" width="18" height="18" viewBox="0 0 18 18"><path d="M-0.2,7.6 Q2.6,5.2 5,6.4 Q7.6,7.4 9,4.2 L10.6,0.8 L18,7.4 Q16.4,10.4 14.2,9.6 Q11.6,8.8 10.4,12 L6.6,17 Z" fill="#f6f6f6" stroke="#4a4a4a" stroke-width="1" stroke-linejoin="round"/><path d="M-0.2,7.6 Q2.6,5.2 5,6.4 Q7.6,7.4 9,4.2 L10.6,0.8 L14.6,4.4 Q13,6.4 11.4,5.8 Q9.6,6 8.8,8.8 Q7.8,11 5,10 Q2.6,9.4 1.8,10.6 Z" fill="#4f97d2" stroke="#2a5f8e" stroke-width="0.8"/><path d="M2.4,7.6 Q4.6,6.8 6.4,7.8" stroke="#b9def7" stroke-width="0.9" fill="none"/></svg>
<div class="row" id="r18" style="top:489.96px;left:48px;letter-spacing:-0.650px">Surface-Trim5</div>
<svg class="ic" style="left:26px;top:491.46px" width="18" height="18" viewBox="0 0 18 18"><path d="M-0.2,7.6 Q2.6,5.2 5,6.4 Q7.6,7.4 9,4.2 L10.6,0.8 L18,7.4 Q16.4,10.4 14.2,9.6 Q11.6,8.8 10.4,12 L6.6,17 Z" fill="#f6f6f6" stroke="#4a4a4a" stroke-width="1" stroke-linejoin="round"/><path d="M-0.2,7.6 Q2.6,5.2 5,6.4 Q7.6,7.4 9,4.2 L10.6,0.8 L14.6,4.4 Q13,6.4 11.4,5.8 Q9.6,6 8.8,8.8 Q7.8,11 5,10 Q2.6,9.4 1.8,10.6 Z" fill="#4f97d2" stroke="#2a5f8e" stroke-width="0.8"/><path d="M2.4,7.6 Q4.6,6.8 6.4,7.8" stroke="#b9def7" stroke-width="0.9" fill="none"/></svg>
<div class="row" id="r19" style="top:513.73px;left:48px;letter-spacing:-0.567px">Fillet1</div>
<svg class="ic" style="left:26px;top:515.23px" width="18" height="18" viewBox="0 0 18 18"><path d="M-0.2,3.2 L7.6,0.6 L17.4,4.6 L17.4,12.8 L9.4,18 L-0.2,14 Z" fill="#ececec" stroke="#3f3f3f" stroke-width="1.1" stroke-linejoin="round"/><path d="M9.4,8.8 Q9.8,4.2 12.6,2.6 L17.4,4.6 L17.4,8 Q13,8.4 9.6,12 Z" fill="#4f98d4" stroke="#2a5f8e" stroke-width="0.7"/><path d="M-0.2,3.2 L9.4,8.8 L9.4,18 M-0.2,3.2 Q4,1.4 7.8,4.4" fill="none" stroke="#3f3f3f" stroke-width="1"/><path d="M0.4,4.2 L8.8,9 L8.8,17 L0.4,13.4 Z" fill="#dedede"/></svg>
<div class="row" id="r20" style="top:537.50px;left:48px;letter-spacing:-1.171px">Thicken1</div>
<svg class="ic" style="left:26px;top:539.00px" width="18" height="18" viewBox="0 0 18 18"><path d="M-0.4,5.4 Q3,3.4 6,4.4 L9.8,1.6 L13.4,4.4 L13.4,12.4 L5.2,17.6 L-0.4,14.4 Z" fill="#4f98d4" stroke="#2a5f8e" stroke-width="0.9" stroke-linejoin="round"/><path d="M-0.2,5.4 Q3,3.4 6,4.4 L9.8,1.6 L13.2,4.4 L10,6.6 Q7.2,5.8 5.2,7.8 Z" fill="#f0f0f0" stroke="#555" stroke-width="0.7"/><path d="M5.2,7.8 V17.4" stroke="#2a5f8e" stroke-width="0.8"/><path d="M15.8,5.6 V13.2" stroke="#1c1c1c" stroke-width="1.6"/><path d="M13.2,11.8 L15.8,15.4 L18.4,11.8 Z" fill="#1c1c1c"/></svg>
<div class="row" id="r21" style="top:561.27px;left:48px;letter-spacing:-0.773px">Surface-Radiate1</div>
<svg class="ic" style="left:26px;top:562.77px" width="18" height="18" viewBox="0 0 18 18"><ellipse cx="9.4" cy="9.5" rx="5.8" ry="8.6" fill="#e6e6e6" stroke="#555" stroke-width="1"/><path d="M5.6,5.6 Q7,2.6 10,2.2" stroke="#fff" stroke-width="1.4" fill="none"/><path d="M1,9.2 Q1.6,6.6 4,7.6 Q9.4,9.4 14.8,7.6 Q17.6,6.6 17.8,9.2 Q17.4,12.8 9.4,12.8 Q1.4,12.8 1,9.2 Z" fill="#3f8bcb" stroke="#27587f" stroke-width="0.8"/></svg>
<div class="row" id="r22" style="top:585.04px;left:48px;letter-spacing:-1.100px">SurfaceCut1</div>
<svg class="ic" style="left:26px;top:586.54px" width="18" height="18" viewBox="0 0 18 18"><path d="M1.4,4.4 L9.2,1 L16.4,4 L16.4,8.4 L8.6,11.8 L1.4,8.6 Z" fill="#f2f2f2" stroke="#4a4a4a" stroke-width="1" stroke-linejoin="round"/><path d="M1.4,4.4 L8.6,7.8 L16.4,4 M8.6,7.8 V11.6" fill="none" stroke="#6a6a6a" stroke-width="0.8"/><path d="M0.6,10 L3.6,8.4 L8.6,11 L13.6,8.4 L17,9.8 L17,12 L8.8,15.6 L0.6,12.2 Z" fill="#3f8bcb" stroke="#27587f" stroke-width="0.8"/><path d="M0.8,12.4 L8.8,15.8 L16.8,12.2 L16.8,14 L8.8,17.6 L0.8,14.2 Z" fill="#e8e8e8" stroke="#4a4a4a" stroke-width="0.8"/></svg>
</div>
<div style="position:absolute;left:215px;top:545px;width:12px;height:48px;background:#f6f6f6;border:1px solid #a9a9a9;border-left:none;box-sizing:border-box"></div>
<div style="position:absolute;left:217px;top:566px;width:6px;height:6px;border-radius:50%;background:#d8d8d8;border:1px solid #c4c4c4;box-sizing:border-box"></div>
</body></html>
